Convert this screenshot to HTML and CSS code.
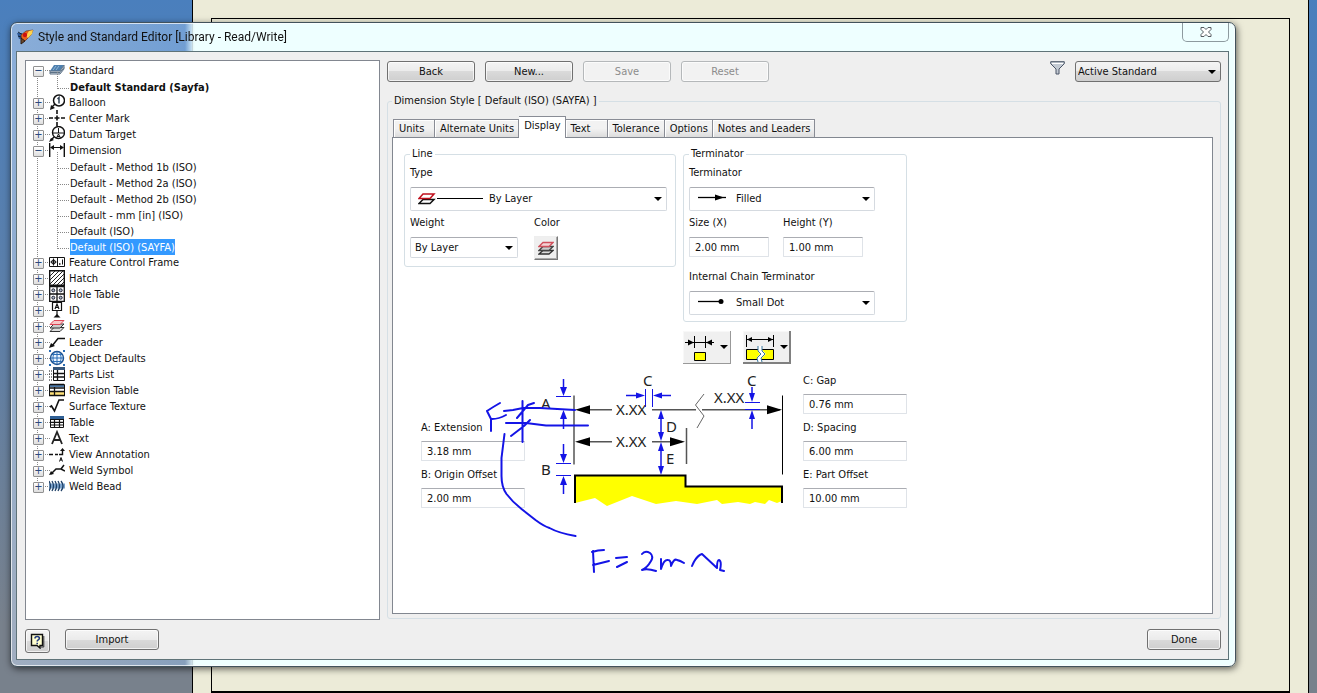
FILE: index.html
```html
<!DOCTYPE html>
<html lang="en">
<head>
    <meta charset="UTF-8">
    <meta name="viewport" content="width=device-width, initial-scale=1.0">
    <title>Style and Standard Editor</title>
    <link rel="stylesheet" href="styles.css">
</head>
<body>
    <div class="desktop">
        <div class="sheet"><div class="sheet-frame"></div></div>
    </div>

    <div class="window">
        <header class="titlebar">
            <svg class="app-icon" width="17" height="17" viewBox="0 0 17 17">
                <path d="M0 4l5 0 1 5-4 1z" fill="#2d5a9a"/>
                <path d="M1 3l5 3M1 7l3 1" stroke="#123" />
                <path d="M16 1L9 2 4 6l1 7 3-1 6-6z" fill="#e8641c" stroke="#5a2a18" stroke-width=".6"/>
                <path d="M16 1l-4 1-3 5 2 2 4-4z" fill="#ffd34d"/>
                <circle cx="8" cy="6" r="2.200" fill="#c11"/>
                <path d="M4 9l0 6 4-3z" fill="#6d4a2c" stroke="#2c1c14"/>
            </svg>
            <h1>Style and Standard Editor [Library - Read/Write]</h1>
            <button class="close" aria-label="Close">
                <svg width="12" height="10" viewBox="0 0 12 10"><path d="M1 .5h3l2 2 2-2h3v2L8.500 5 11 7.500v2H8l-2-2-2 2H1v-2L3.500 5 1 2.500z" fill="#fff" stroke="#555b60"/></svg>
            </button>
        </header>

        <div class="client">
            <div class="columns">
                <ul class="tree">
                    <li class="open"><svg viewBox="0 0 16 16"><path d="M5 3h10l-4 6H1z" fill="#4d7fae"/><path d="M7 4l-3 4M10 4L7 8" stroke="#8fb5d6"/><path d="M1 9h10l4-6v4l-4 5H1z" fill="#d5dde5" stroke="#5c7186"/><path d="M1 10.500h10l4-5" fill="none" stroke="#5c7186"/></svg><span>Standard</span>
                        <ul>
                            <li><b>Default Standard (Sayfa)</b></li>
                        </ul>
                    </li>
                    <li><svg viewBox="0 0 16 16"><circle cx="10" cy="6.500" r="5.500" fill="#fff" stroke="#111" stroke-width="1.500"/><path d="M8.500 5L10 3.500V9.500" fill="none" stroke="#345" stroke-width="1.500"/><path d="M6 10l-3 3" stroke="#111" stroke-width="1.500"/><path d="M1 16l1-5 4 3z" fill="#111"/></svg><span>Balloon</span></li>
                    <li><svg viewBox="0 0 16 16"><path d="M0 8h4M5.500 8h5M12 8h4M8 0v4M8 5.500v5M8 12v4" stroke="#111" stroke-width="1.600"/></svg><span>Center Mark</span></li>
                    <li><svg viewBox="0 0 16 16"><circle cx="9.500" cy="6.500" r="6" fill="#fff" stroke="#111" stroke-width="1.400"/><path d="M3.500 7h12M9.500 2v5M7.500 12l2-4 2 4M8 10.500h3" fill="none" stroke="#111"/><path d="M5 11l-3 3" stroke="#111" stroke-width="1.500"/><path d="M0 16l2-4 3 2z" fill="#111"/></svg><span>Datum Target</span></li>
                    <li class="open"><svg viewBox="0 0 16 16"><path d="M.7 1v14M15.300 1v14" stroke="#111" stroke-width="1.400"/><path d="M3 5.500h10" stroke="#111"/><path d="M1 5.500l4-2.500v5zM15 5.500l-4-2.500v5z" fill="#111"/></svg><span>Dimension</span>
                        <ul>
                            <li><span>Default - Method 1b (ISO)</span></li>
                            <li><span>Default - Method 2a (ISO)</span></li>
                            <li><span>Default - Method 2b (ISO)</span></li>
                            <li><span>Default - mm [in] (ISO)</span></li>
                            <li><span>Default (ISO)</span></li>
                            <li><span class="selected">Default (ISO) (SAYFA)</span></li>
                        </ul>
                    </li>
                    <li><svg viewBox="0 0 16 16"><path d="M.5 3.500h15v9H.5zM8.500 3.500v9" fill="#fff" stroke="#111"/><circle cx="4.500" cy="8" r="2" fill="none" stroke="#111"/><path d="M4.500 4.500v7M1.500 8h6M13.500 5.500v5" stroke="#111"/><path d="M10 10h1.500" stroke="#111" stroke-width="1.500"/></svg><span>Feature Control Frame</span></li>
                    <li><svg viewBox="0 0 16 16"><path d="M.7.7h14.600v14.600H.7z" fill="#fff" stroke="#111" stroke-width="1.400"/><path d="M1 6l5-5M1 10l9-9M1 14L14 1M4 15L15 4M8 15l7-7M12 15l3-3" stroke="#222"/></svg><span>Hatch</span></li>
                    <li><svg viewBox="0 0 16 16"><path d="M.7.7h14.600v14.600H.7zM8 1v14M1 8h14" fill="#fff" stroke="#111" stroke-width="1.300"/><g fill="#a9b8c8" stroke="#223"><circle cx="4.300" cy="4.300" r="1.500"/><circle cx="11.700" cy="4.300" r="1.500"/><circle cx="4.300" cy="11.700" r="1.500"/><circle cx="11.700" cy="11.700" r="1.500"/></g></svg><span>Hole Table</span></li>
                    <li><svg viewBox="0 0 16 16"><path d="M3.500.5h9v8h-9z" fill="#fff" stroke="#111" stroke-width="1.200"/><path d="M6 7l2-5 2 5M7 5.500h2M8 9v4" fill="none" stroke="#111" stroke-width="1.200"/><path d="M4.500 15.500L8 12l3.500 3.500z" fill="#111"/></svg><span>ID</span></li>
                    <li><svg viewBox="0 0 16 16"><path d="M5 9.500h10l-4 4H1z" fill="#ddd" stroke="#333"/><path d="M5 6h10l-4 4H1z" fill="#ccc" stroke="#333"/><path d="M5 2.500h10l-4 4H1z" fill="#f7c9c9" stroke="#d45"/></svg><span>Layers</span></li>
                    <li><svg viewBox="0 0 16 16"><path d="M3 12l6-7.500h7" fill="none" stroke="#111" stroke-width="1.500"/><path d="M0 14l2-5 4 3z" fill="#111"/></svg><span>Leader</span></li>
                    <li><svg viewBox="0 0 16 16"><circle cx="8" cy="8" r="6.500" fill="#eaf5ff" stroke="#1c4f8c" stroke-width="1.400"/><path d="M8 1.500v13M1.500 8h13M3 4.500h10M3 11.500h10M5.500 2c-2 4-2 8 0 12M10.500 2c2 4 2 8 0 12" fill="none" stroke="#2a6db5"/><path d="M0 0h2v2H0zM14 0h2v2h-2zM0 14h2v2H0zM14 14h2v2h-2z" fill="#2a6db5"/></svg><span>Object Defaults</span></li>
                    <li><svg viewBox="0 0 16 16"><path d="M4.500 1.500h11v13h-11z" fill="#fff" stroke="#111"/><path d="M4 1h12v3H4z" fill="#34557a"/><path d="M4 7.500h12M4 11h12M8.500 4v11" stroke="#111" stroke-width="1.300"/><path d="M0 5h3M0 8h3M0 11h3M0 14h3" stroke="#111" stroke-dasharray="1 1"/></svg><span>Parts List</span></li>
                    <li><svg viewBox="0 0 16 16"><path d="M.5 2.500h15v11H.5z" fill="#fff" stroke="#111"/><path d="M1 3h14v2H1z" fill="#4b79a8"/><path d="M1 10h14v3H1z" fill="#ffe27a"/><path d="M0 6h16M0 9.500h16M5.500 5v9M1 2.500h14M0 13.500h16" stroke="#111" stroke-width="1.300"/></svg><span>Revision Table</span></li>
                    <li><svg viewBox="0 0 16 16"><path d="M1 9l1.500-1 3 5L10 2h5" fill="none" stroke="#111" stroke-width="1.600"/></svg><span>Surface Texture</span></li>
                    <li><svg viewBox="0 0 16 16"><path d="M1.500 2.500h13v11h-13z" fill="#fff" stroke="#111"/><path d="M1 2h14v3H1z" fill="#2f5f94"/><path d="M1 5.500h14M1 8.300h14M1 11h14M5.500 5v9M10.500 5v9" stroke="#111" stroke-width="1.200"/></svg><span>Table</span></li>
                    <li><svg viewBox="0 0 16 16"><path d="M3 14L8 2l5 12M5 10h6" fill="none" stroke="#222" stroke-width="1.800"/></svg><span>Text</span></li>
                    <li><svg viewBox="0 0 16 16"><path d="M0 8.500h4M6 8.500h3M10 8.500h3.500V4" fill="none" stroke="#111" stroke-width="1.400"/><path d="M11 5l2.500-3L16 5z" fill="#111"/><path d="M10.500 15.500l1.500-4 1.500 4M11 14h2" fill="none" stroke="#111"/></svg><span>View Annotation</span></li>
                    <li><svg viewBox="0 0 16 16"><path d="M2 12l5-5h5l3-4M12 7l4 2" fill="none" stroke="#111" stroke-width="1.500"/><path d="M0 13l2-4 3 3z" fill="#111"/></svg><span>Weld Symbol</span></li>
                    <li><svg viewBox="0 0 16 16"><path d="M0 8h16" stroke="#7ba3cc" stroke-width="5"/><path d="M0 3q3 5 0 10M3 3q3 5 0 10M6 3q3 5 0 10M9 3q3 5 0 10M12 3q4 5 0 10" fill="none" stroke="#1d3f66" stroke-width="1.300"/></svg><span>Weld Bead</span></li>
                </ul>

                <main>
                    <div class="toolbar">
                        <button class="btn">Back</button>
                        <button class="btn">New...</button>
                        <button class="btn" disabled>Save</button>
                        <button class="btn" disabled>Reset</button>
                        <svg class="funnel" width="15" height="14" viewBox="0 0 15 14"><path d="M.7.7h13.600v2L9 8v5H6V8L.7 2.700z" fill="#c3cad3" stroke="#4a5566"/><path d="M2 2.500h11" stroke="#fff"/></svg>
                        <div class="select filter">
                            <select aria-label="Filter"><option>Active Standard</option></select>
                        </div>
                    </div>

                    <fieldset class="style-group">
                        <legend>Dimension Style [ Default (ISO) (SAYFA) ]</legend>
                        <div class="tabs" role="tablist">
                            <button role="tab">Units</button>
                            <button role="tab">Alternate Units</button>
                            <button role="tab" class="active" aria-selected="true">Display</button>
                            <button role="tab">Text</button>
                            <button role="tab">Tolerance</button>
                            <button role="tab">Options</button>
                            <button role="tab">Notes and Leaders</button>
                        </div>

                        <div class="panel">
                            <div class="groups">
                                <fieldset class="group line-group">
                                    <legend>Line</legend>
                                    <label for="type">Type</label>
                                    <div class="select tall">
                                        <svg width="66" height="14" viewBox="0 0 66 14"><path d="M5 7.500h11l-4 4H1z" fill="#fff" stroke="#111" stroke-width="1.500"/><path d="M5 2h11l-4 4.500H1z" fill="#fff" stroke="#c00f1c" stroke-width="1.500"/><path d="M19 6.500h46" stroke="#000"/></svg>
                                        <select id="type" class="with-line"><option>By Layer</option></select>
                                    </div>
                                    <div class="pair">
                                        <div class="weight">
                                            <label for="weight">Weight</label>
                                            <div class="select"><select id="weight"><option>By Layer</option></select></div>
                                        </div>
                                        <div>
                                            <label for="color">Color</label>
                                            <button id="color" class="color-btn" aria-label="Color">
                                                <svg width="16" height="15" viewBox="0 0 16 15"><path d="M5 9.500h10l-4 3.500H1z" fill="#ddd" stroke="#333" stroke-width="1.300"/><path d="M5 5.500h10l-4 4H1z" fill="#ccc" stroke="#444" stroke-width="1.300"/><path d="M5 1.500h10l-4 4H1z" fill="#f5d4d6" stroke="#d0505c" stroke-width="1.300"/></svg>
                                            </button>
                                        </div>
                                    </div>
                                </fieldset>

                                <div class="right-groups">
                                    <fieldset class="group terminator-group">
                                        <legend>Terminator</legend>
                                        <label for="terminator">Terminator</label>
                                        <div class="select tall">
                                            <svg width="30" height="14" viewBox="0 0 30 14"><path d="M1 5.500h28" stroke="#000" stroke-width="1.300"/><path d="M18 2.500l9 3-9 3z"/></svg>
                                            <select id="terminator" class="with-arrow"><option>Filled</option></select>
                                        </div>
                                        <div class="pair sizes">
                                            <div>
                                                <label for="size">Size (X)</label>
                                                <input id="size" type="text" value="2.00 mm">
                                            </div>
                                            <div>
                                                <label for="height">Height (Y)</label>
                                                <input id="height" type="text" value="1.00 mm">
                                            </div>
                                        </div>
                                        <label for="chain" class="chain-label">Internal Chain Terminator</label>
                                        <div class="select tall">
                                            <svg width="30" height="14" viewBox="0 0 30 14"><path d="M1 5.500h22" stroke="#000" stroke-width="1.300"/><circle cx="24" cy="5.500" r="2.500"/></svg>
                                            <select id="chain" class="with-arrow"><option>Small Dot</option></select>
                                        </div>
                                    </fieldset>
                                    <div class="mode-buttons">
                                        <button class="mode" aria-label="Arrow placement">
                                            <svg width="48" height="33" viewBox="0 0 48 33"><path d="M2 11.500h29M11.500 5v12M22.500 5v12" stroke="#000"/><path d="M5 8.500l6 3-6 3zM29 8.500l-6 3 6 3z"/><path d="M11.500 21.500h11v8h-11z" fill="#ff0" stroke="#000"/><path d="M37 14h8l-4 4z"/></svg>
                                        </button>
                                        <button class="mode raised" aria-label="Break display">
                                            <svg width="48" height="33" viewBox="0 0 48 33"><path d="M4 8.500h26M3.500 4v12M30.500 4v12" stroke="#000"/><path d="M4 8.500l5-2.500v5zM30 8.500l-5-2.500v5z"/><path d="M3.500 18.500h27v10h-27z" fill="#ff0" stroke="#000"/><path d="M17 15v5l3 3-4 4v4" fill="none" stroke="#fff" stroke-width="4"/><path d="M15 15v5l3 3-4 4 1 4M19 15v5l3 3-4 4 1 4" fill="none" stroke="#38779e"/><path d="M37 14h8l-4 4z"/></svg>
                                        </button>
                                    </div>
                                </div>
                            </div>

                            <div class="diagram">
                                <div class="fields">
                                    <label for="ext">A: Extension</label>
                                    <input id="ext" type="text" value="3.18 mm">
                                    <label for="origin">B: Origin Offset</label>
                                    <input id="origin" type="text" value="2.00 mm">
                                </div>

                                <svg class="drawing" width="254" height="146" viewBox="536 366 254 146">
                                    <path d="M575 476H685.500V486.500H782V501L777 503 769 500 765 504 755 502 750 504 738 502 722 504 717 500 697 504 676 501 656 504 632 496 607 506 595 498 575 503z" fill="#ff0"/>
                                    <path d="M575 503v-27.500h110.500v11H782V503" fill="none" stroke="#000" stroke-width="2"/>
                                    <path d="M574 395.500v69M686.500 428v36" stroke="#555" stroke-width="1.500"/>
                                    <path d="M782.500 395.500v79" stroke="#000"/>
                                    <path d="M580 409.800h32M652 409.800h44M702 409.800h78M580 441.800h32M652 441.800h30" stroke="#555" stroke-width="1.500"/>
                                    <path d="M704 394l-8.500 11 8.500 11-7 12" fill="none" stroke="#666"/>
                                    <path d="M575 409.800l15-4.500v9zM782 409.800l-15-4.500v9zM575 441.800l15-4.500v9zM685 441.800l-15-4.500v9z" fill="#000"/>
                                    <g stroke="#1414e6" fill="none">
                                        <path stroke-width="1.500" d="M563.500 379v10M563.500 417v12M563.500 444v10M563.500 482v12M626 395.500h12M660 395.500h11M661 415v22M661 446v25M752 387v8M752 417v12"/>
                                        <path d="M556 396.500h15M556 409.500h18M556 463.500h15M556 475.500h15M645.500 389v18M652.500 389v18M745 402.500h15M745 409.500h15"/>
                                    </g>
                                    <path fill="#1414e6" d="M563.500 396l-3.500-9h7zM563.500 410l-3.500 9h7zM563.500 463l-3.500-9h7zM563.500 476l-3.500 9h7zM645 395.500l-9-3v6zM653 395.500l9-3v6zM661 410l-3 9h6zM661 441l-3-9h6zM661 442l-3 9h6zM661 475l-3-9h6zM752 402l-3-9h6zM752 410l-3 9h6z"/>
                                    <g class="dims">
                                        <text x="541" y="409">A</text>
                                        <text x="541" y="475">B</text>
                                        <text x="643" y="386">C</text>
                                        <text x="747" y="386">C</text>
                                        <text x="666" y="432">D</text>
                                        <text x="666" y="464">E</text>
                                        <text x="616" y="415">X.XX</text>
                                        <text x="616" y="447">X.XX</text>
                                        <text x="714" y="403">X.XX</text>
                                    </g>
                                </svg>

                                <div class="fields">
                                    <label for="gap">C: Gap</label>
                                    <input id="gap" type="text" value="0.76 mm">
                                    <label for="spacing">D: Spacing</label>
                                    <input id="spacing" type="text" value="6.00 mm">
                                    <label for="part">E: Part Offset</label>
                                    <input id="part" type="text" value="10.00 mm">
                                </div>

                                <!-- freehand pen marks over the preview -->
                                <svg class="ink" width="260" height="210" viewBox="480 372 260 210" role="img" aria-label="F = 2mm">
                                    <path d="M487 411l4 8v12M487 411q6-4 13-8M492 419q7 0 14-4"/>
                                    <path d="M504 411l9-1 10-2h17l35 2M506 423l20 0 20 2.500h42"/>
                                    <path d="M522.500 401v41M517 418l11-13 6-2M511 436l13-10 6-6"/>
                                    <path d="M504.500 434l-3 24v18q0 11 5 18 6 8 15 15l14 11q8 6 14 8 9 5 26 8"/>
                                    <path d="M593 551l1 21M592 552q6-2 12-2M593 565l16-4M616 558l11-1M617 567l10-5"/>
                                    <path d="M642 554q3-4 8-1 4 3 1 8-4 7-9 9 5-2 14 1M661 559v10q3-10 7-9 3 0 3 6 3-8 6-6 4 1 7 3"/>
                                    <path d="M692 566q4-10 10-12l15 14q0-8 2-8 3 1 1 10l4 1"/>
                                </svg>
                            </div>
                        </div>
                    </fieldset>
                </main>
            </div>

            <footer>
                <button class="btn help" aria-label="Help">
                    <svg width="15" height="16" viewBox="0 0 15 16"><path d="M1.500 1.500h11v11H10v2.500L7 12.500H1.500z" fill="#ffffd0" stroke="#111" stroke-width="1.400"/><path d="M13.800 3v11H11" fill="none" stroke="#333"/><path d="M5 5.500q0-2 2.200-2t2.200 1.700q0 1-1.200 1.700-1 .6-1 1.600M7.200 9.700v1.500" fill="none" stroke="#223a80" stroke-width="1.600"/></svg>
                </button>
                <button class="btn import">Import</button>
                <button class="btn done">Done</button>
            </footer>
        </div>
    </div>
</body>
</html>
```
FILE: styles.css
```css
* {
    box-sizing: border-box;
}

body {
    margin: 0;
    padding: 22px 81px 26px 10px;
    min-height: 100vh;
    display: flex;
    font-family: "DejaVu Sans Condensed", "DejaVu Sans", sans-serif;
    font-size: 11px;
    line-height: 16px;
    color: #111;
}

button, input, select {
    font: inherit;
    color: inherit;
    margin: 0;
}

/* drawing behind the dialog */
.desktop {
    position: fixed;
    inset: 0;
    z-index: -1;
    display: flex;
    padding: 0 8px 0 192px;
    background: linear-gradient(#4a7fbd, #5f7fa6 50%, #78818c 90%);
}

.sheet {
    flex: 1;
    display: flex;
    padding: 18px 18px 0;
    background: #ecebd8;
    border: solid #000;
    border-width: 0 1px;
}

.sheet-frame {
    flex: 1;
    border: 1px solid #000;
    border-bottom-width: 2px;
}

/* window */
.window {
    flex: 1;
    display: flex;
    flex-direction: column;
    padding: 0 6px 6px 5px;
    border: 1px solid #41525c;
    border-radius: 7px;
    background: linear-gradient(to right, rgba(200, 220, 245, 0.5) 0, rgba(150, 190, 235, 0.5) 174px, #eeffff 184px);
    box-shadow: inset 0 0 0 1px rgba(255, 255, 255, 0.7), 1px 2px 7px rgba(0, 0, 0, 0.6);
}

.titlebar {
    display: flex;
    align-items: center;
    height: 28px;
    padding-left: 1px;
}

h1 {
    flex: 1;
    margin: 0 0 0 4px;
    font-family: Roboto, "Open Sans", sans-serif;
    font-size: 12px;
    font-weight: normal;
}

.close {
    align-self: flex-start;
    display: flex;
    align-items: center;
    justify-content: center;
    width: 47px;
    height: 19px;
    padding: 0;
    background: none;
    border: 1px solid #8d9a9f;
    border-top: none;
    border-radius: 0 0 5px 5px;
}

.client {
    flex: 1;
    display: flex;
    flex-direction: column;
    gap: 9px;
    padding: 8px 7px 6px 8px;
    background: #efefef;
    border: 1px solid #5f7378;
}

.columns {
    flex: 1;
    display: flex;
    gap: 7px;
}

/* tree */
.tree, .tree ul {
    list-style: none;
    margin: 0;
    padding: 0;
}

.tree {
    width: 355px;
    padding: 2px 7px;
    background: #fff;
    border: 1px solid #828790;
}

.tree li {
    position: relative;
    padding-left: 36px;
}

.tree > li::before {
    content: "";
    position: absolute;
    left: 4px;
    top: 7px;
    width: 12px;
    height: 100%;
    border: dotted #888;
    border-width: 1px 0 0 1px;
}

.tree > li:last-child::before {
    height: 1px;
}

.tree > li::after {
    content: "+";
    position: absolute;
    left: 0;
    top: 3px;
    width: 9px;
    height: 9px;
    line-height: 7px;
    text-align: center;
    color: #2b4a7d;
    background: linear-gradient(#fff, #ddd);
    border: 1px solid #919191;
    border-radius: 1px;
}

.tree > li.open::after {
    content: "−";
}

.tree > li > svg {
    position: absolute;
    left: 16px;
    top: -1px;
    width: 16px;
    height: 16px;
}

.tree span, .tree b {
    display: inline-block;
    height: 16px;
    vertical-align: top;
}

.tree ul span, .tree ul b {
    line-height: 18px;
}

.tree ul li {
    height: 16px;
    margin-left: -12px;
    padding-left: 13px;
}

.tree ul li::before {
    content: "";
    position: absolute;
    left: 0;
    top: -7px;
    width: 11px;
    height: 16px;
    border: dotted #888;
    border-width: 0 0 1px 1px;
}

.selected {
    color: #fff;
    background: #3399ff;
}

/* right side */
main {
    flex: 1;
    display: flex;
    flex-direction: column;
    gap: 11px;
    padding: 1px 0;
}

.toolbar {
    display: flex;
    align-items: center;
    gap: 10px;
}

.btn {
    width: 88px;
    height: 21px;
    padding: 0;
    background: linear-gradient(#f4f4f4 0, #ebebeb 50%, #dadada 50%, #cfcfcf);
    border: 1px solid #707070;
    border-radius: 3px;
    box-shadow: inset 0 0 0 1px rgba(255, 255, 255, 0.7);
}

.btn:disabled {
    color: #8c8c8c;
    background: #f2f2f2;
    border-color: #b5b8ba;
}

.funnel {
    margin-left: auto;
    margin-bottom: 7px;
}

.select {
    position: relative;
    height: 21px;
}

.select select {
    width: 100%;
    height: 100%;
    padding: 0 20px 0 4px;
    appearance: none;
    background: #fff;
    border: 1px solid #d5dae0;
    border-top-color: #abadb3;
    border-radius: 2px;
}

.select::after {
    content: "";
    position: absolute;
    right: 5px;
    top: 50%;
    margin-top: -2px;
    border: 4px solid transparent;
    border-top-color: #000;
    border-bottom: none;
    pointer-events: none;
}

.select svg {
    position: absolute;
    left: 8px;
    top: 5px;
    pointer-events: none;
}

.select.tall {
    height: 24px;
}

.select .with-line {
    padding-left: 78px;
}

.select .with-arrow {
    padding-left: 46px;
}

.filter {
    width: 146px;
}

.filter select {
    padding-left: 2px;
    background: linear-gradient(#f4f4f4 0, #ebebeb 50%, #dadada 50%, #cfcfcf);
    border-color: #707070;
    border-radius: 3px;
}

fieldset {
    margin: 0;
    min-width: 0;
    border: 1px solid #d5dfe5;
    border-radius: 3px;
}

legend {
    padding: 0 2px;
}

.style-group {
    flex: 1;
    display: flex;
    flex-direction: column;
    padding: 7px 7px 4px 4px;
}

.tabs {
    display: flex;
    align-items: flex-end;
    margin: 0 0 -1px 1px;
}

.tabs button {
    min-width: 42px;
    height: 19px;
    padding: 0 4px 0 5px;
    text-align: left;
    background: linear-gradient(#f2f2f2 50%, #dcdcdc);
    border: 1px solid #898c95;
    border-left-width: 0;
    box-shadow: inset 1px 1px 0 #fff;
}

.tabs button:first-child {
    border-left-width: 1px;
}

.tabs .active {
    position: relative;
    height: 22px;
    padding-bottom: 3px;
    background: #fff;
    border-bottom: none;
}

.panel {
    flex: 1;
    padding: 8px 11px 0;
    background: #fff;
    border: 1px solid #828790;
}

.groups {
    display: flex;
    align-items: flex-start;
    gap: 7px;
}

.group {
    padding: 3px 8px 6px 5px;
}

.group label, .fields label {
    display: block;
}

.group label + .select, .group label + input {
    margin-top: 6px;
}

.line-group {
    width: 272px;
}

.terminator-group {
    width: 224px;
}

.terminator-group .select {
    width: 186px;
}

.pair {
    display: flex;
    gap: 16px;
    margin-top: 4px;
}

.weight {
    width: 108px;
}

.sizes {
    gap: 14px;
}

.chain-label {
    margin-top: 12px;
}

input {
    display: block;
    width: 80px;
    height: 20px;
    padding: 0 5px;
    background: #fff;
    border: 1px solid #dfe3e8;
    border-top-color: #abadb3;
    border-radius: 1px;
}

.color-btn {
    display: flex;
    align-items: center;
    justify-content: center;
    width: 24px;
    height: 24px;
    margin-top: 5px;
    padding: 0;
    background: #efefef;
    border: 1px solid;
    border-color: #eee #777 #777 #eee;
    box-shadow: inset -1px -1px 0 #aaa;
}

.mode-buttons {
    display: flex;
    gap: 12px;
    margin-top: 9px;
}

.mode {
    display: flex;
    width: 48px;
    height: 33px;
    padding: 0;
    background: #f0f0f0;
    border: none;
    box-shadow: inset -1px -1px 0 #999, inset 1px 1px 0 #f8f8f8;
}

.raised {
    box-shadow: inset -2px -2px 0 #808080, inset 1px 1px 0 #f8f8f8;
}

/* dimension preview */
.diagram {
    position: relative;
    display: flex;
    align-items: flex-end;
    padding: 2px 0 70px 17px;
}

.fields {
    display: flex;
    flex-direction: column;
    width: 104px;
}

.fields input {
    width: 100%;
    margin: 5px 0 6px;
}

.fields input:last-child {
    margin-bottom: 4px;
}

.drawing {
    margin: 0 13px 0 11px;
}

.dims {
    font-family: "Noto Sans", "Open Sans", sans-serif;
    font-size: 15px;
    fill: #222;
}

.ink {
    position: absolute;
    left: 76px;
    top: 8px;
    fill: none;
    stroke: #1414e6;
    stroke-width: 2;
    stroke-linecap: round;
    stroke-linejoin: round;
    pointer-events: none;
}

footer {
    display: flex;
    align-items: flex-start;
}

.help {
    display: flex;
    align-items: center;
    justify-content: center;
    width: 25px;
    height: 24px;
}

.import {
    width: 94px;
    margin-left: 15px;
}

.done {
    width: 74px;
    margin-left: auto;
}
```
